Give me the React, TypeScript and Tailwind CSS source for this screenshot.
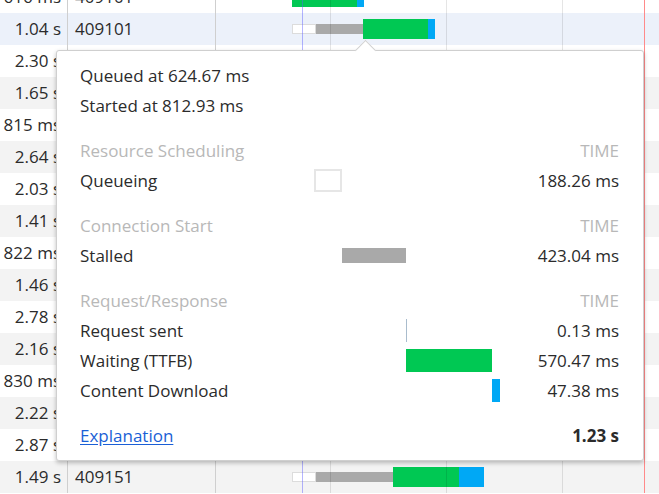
import React from "react";

type Seg = { left: number; width: number; color: string; thin?: boolean; box?: boolean };
type Row = { t: string; n: string; bg: string; segs: Seg[] };

const G = "#00c853";
const B = "#00a8f5";
const S = "#a9a9a9";

const full = (q: number, w: number, d: number): Seg[] => [
  { left: 76, width: 24, color: "#fff", thin: true, box: true },
  { left: 100, width: q, color: S, thin: true },
  { left: 100 + q, width: w, color: G },
  { left: 100 + q + w, width: d, color: B },
];

const rows: Row[] = [
  { t: "616 ms", n: "409101", bg: "bg-white", segs: [
    { left: 76, width: 65, color: G },
    { left: 141, width: 7, color: B },
  ] },
  { t: "1.04 s", n: "409101", bg: "bg-[#ecf1fa]", segs: full(47, 65, 7) },
  { t: "2.30 s", n: "409105", bg: "bg-white", segs: [] },
  { t: "1.65 s", n: "409109", bg: "bg-[#f3f3f3]", segs: [] },
  { t: "815 ms", n: "409113", bg: "bg-white", segs: [] },
  { t: "2.64 s", n: "409117", bg: "bg-[#f3f3f3]", segs: [] },
  { t: "2.03 s", n: "409121", bg: "bg-white", segs: [] },
  { t: "1.41 s", n: "409125", bg: "bg-[#f3f3f3]", segs: [] },
  { t: "822 ms", n: "409129", bg: "bg-white", segs: [] },
  { t: "1.46 s", n: "409131", bg: "bg-[#f3f3f3]", segs: [] },
  { t: "2.78 s", n: "409135", bg: "bg-white", segs: [] },
  { t: "2.16 s", n: "409139", bg: "bg-[#f3f3f3]", segs: [] },
  { t: "830 ms", n: "409141", bg: "bg-white", segs: [] },
  { t: "2.22 s", n: "409145", bg: "bg-[#f3f3f3]", segs: [] },
  { t: "2.87 s", n: "409149", bg: "bg-white", segs: [] },
  { t: "1.49 s", n: "409151", bg: "bg-[#f3f3f3]", segs: full(77, 66, 25) },
];

function TableRow({ r }: { r: Row }) {
  return (
    <div className={`flex h-[32px] ${r.bg}`}>
      <div className="w-[68px] shrink-0 border-r border-[#cfcfcf] flex items-center justify-end pr-[6px] whitespace-nowrap">
        {r.t}
      </div>
      <div className="w-[148px] shrink-0 border-r border-[#cfcfcf] flex items-center pl-[7px]">
        {r.n}
      </div>
      <div className="flex-1 relative">
        {r.segs.map((s, i) => (
          <div
            key={i}
            className={s.box ? "absolute border border-[#dcdcdc]" : "absolute"}
            style={{
              left: s.left,
              width: s.width,
              top: s.thin ? 11 : 6,
              height: s.thin ? 10 : 20,
              background: s.color,
            }}
          />
        ))}
      </div>
    </div>
  );
}

type Bar = { left: number; width: number; top: number; height: number; color: string; box?: boolean };
type TRow = { label: string; value: string; bar?: Bar };

function Header({ label }: { label: string }) {
  return (
    <div className="flex items-center h-[30px] mt-[15px] text-[#b8b8b8]">
      <div className="flex-1">{label}</div>
      <div>TIME</div>
    </div>
  );
}

function TimingRow({ r }: { r: TRow }) {
  return (
    <div className="flex items-center h-[30px]">
      <div className="w-[234px] shrink-0">{r.label}</div>
      <div className="w-[186px] shrink-0 relative h-full">
        {r.bar && (
          <div
            className={r.bar.box ? "absolute border-2 border-[#e6e6e6] bg-white" : "absolute"}
            style={{
              left: r.bar.left,
              width: r.bar.width,
              top: r.bar.top,
              height: r.bar.height,
              background: r.bar.box ? undefined : r.bar.color,
            }}
          />
        )}
      </div>
      <div className="flex-1 text-right">{r.value}</div>
    </div>
  );
}

export default function App() {
  return (
    <div
      className="relative w-[659px] h-[494px] overflow-hidden bg-white text-[17px] text-[#2b2b2b]"
      style={{ fontFamily: '"Open Sans", "Noto Sans", sans-serif' }}
    >
      <div className="relative mt-[-19px]">
        {rows.map((r, i) => (
          <TableRow key={i} r={r} />
        ))}
        <div className="absolute top-0 bottom-0 left-[216px] right-0 pointer-events-none">
          <div className="absolute top-0 bottom-0 left-[114px] w-px bg-[rgba(0,0,0,0.1)]" />
          <div className="absolute top-0 bottom-0 left-[230px] w-px bg-[rgba(0,0,0,0.1)]" />
          <div className="absolute top-0 bottom-0 left-[346px] w-px bg-[rgba(0,0,0,0.1)]" />
          <div className="absolute top-0 bottom-0 left-[86px] w-px bg-[rgba(90,90,255,0.45)]" />
          <div className="absolute top-0 bottom-0 left-[428px] w-px bg-[#ff8a8a]" />
        </div>
      </div>

      <div className="absolute left-[56px] top-[50px] w-[588px] bg-white border border-[#cfcfcf] rounded-[3px] shadow-[0_2px_4px_rgba(0,0,0,0.25)] pl-[23px] pr-[24px] pt-[10px] pb-[9px]">
        <div className="absolute left-[301px] top-[-8px] w-[15px] h-[15px] bg-white border-l border-t border-[#cfcfcf] rotate-45" />
        <div className="relative">
          <div className="h-[30px] flex items-center">Queued at 624.67 ms</div>
          <div className="h-[30px] flex items-center">Started at 812.93 ms</div>

          <Header label="Resource Scheduling" />
          <TimingRow r={{ label: "Queueing", value: "188.26 ms", bar: { left: 0, width: 28, top: 3, height: 23, color: "#fff", box: true } }} />

          <Header label="Connection Start" />
          <TimingRow r={{ label: "Stalled", value: "423.04 ms", bar: { left: 28, width: 64, top: 7, height: 15, color: S } }} />

          <Header label="Request/Response" />
          <TimingRow r={{ label: "Request sent", value: "0.13 ms", bar: { left: 92, width: 1, top: 3, height: 23, color: "#a9bccd" } }} />
          <TimingRow r={{ label: "Waiting (TTFB)", value: "570.47 ms", bar: { left: 92, width: 86, top: 3, height: 23, color: G } }} />
          <TimingRow r={{ label: "Content Download", value: "47.38 ms", bar: { left: 178, width: 8, top: 3, height: 23, color: B } }} />

          <div className="flex items-center h-[30px] mt-[15px]">
            <a href="#" className="flex-1 text-[#1a5fd6] underline underline-offset-2">Explanation</a>
            <div className="font-bold">1.23 s</div>
          </div>
        </div>
      </div>
    </div>
  );
}
